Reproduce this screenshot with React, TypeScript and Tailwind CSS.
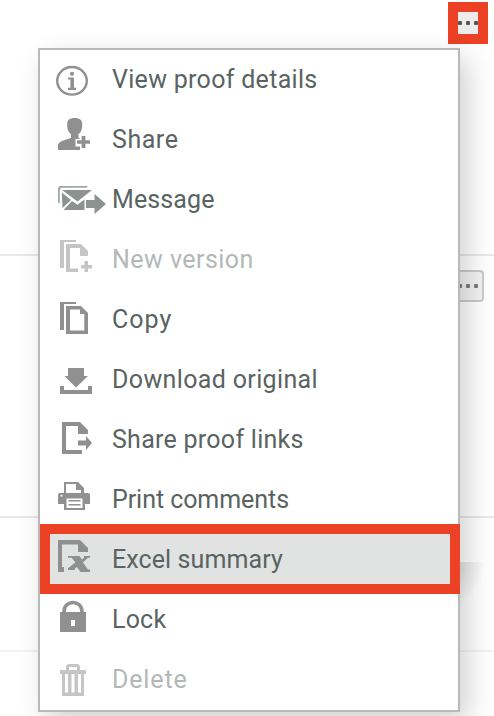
import type { ReactNode } from "react";

type Item = { label: string; tracking: string; icon: ReactNode; disabled?: boolean; active?: boolean };

const items: Item[] = [
  {
    label: "View proof details",
    tracking: "tracking-[0.3px]",
    icon: (
      <>
        <ellipse cx="72" cy="30.8" rx="14.8" ry="13.8" fill="none" stroke="currentColor" strokeWidth="2.4" />
        <circle cx="72" cy="23.8" r="2.1" />
        <path d="M68 27.4h6v10.4h2v2.2h-8v-2.2h2.4v-8.2H68z" />
      </>
    ),
  },
  {
    label: "Share",
    tracking: "tracking-[0.55px]",
    icon: (
      <>
        <path d="M74.7 8c5 0 7.500 2 7.500 6 0 4.500-.5 7.500-3.700 10.200V28l5.500 2v10H58v-4.500c0-3.500 3.500-4.500 13-7.500v-3.800C67.700 21.500 67.200 18.500 67.200 14c0-4 2.500-6 7.500-6z" />
        <path d="M80 25h6.500v4H92v7.500h-5.500V40H80v-3.500h-4.500V29H80z" fill="white" />
        <path d="M81.6 26h3.800v4.200H90v3.600h-4.600V38h-3.800v-4.200H77v-3.600h4.600z" />
      </>
    ),
  },
  {
    label: "Message",
    tracking: "tracking-[0.1px]",
    icon: (
      <g fill="#8b9290">
        <path d="M58 19q0-3 3-3h27l-1.500 1.800H62q-2.200 0-2.200 2.200v14L58 32z" opacity=".8" />
        <path d="M62 20h30L77.500 31.500z" />
        <path d="M61.800 22.500 71 30l-8.500 8z" />
        <path d="m72 31 5.500 3.700L83 30.500l3-2.200V40H63.500z" />
        <path d="M84.500 28h9v-6L107 34l-13.500 12v-6h-9z" fill="white" />
        <path d="M86 30h8.500v-6L106 34l-11.500 10v-6H86z" />
      </g>
    ),
  },
  {
    label: "New version",
    tracking: "tracking-[0.45px]",
    disabled: true,
    icon: (
      <>
        <path d="M60 10h16v2H64v26h-4z" />
        <path d="M66 14h15l7 7v5h-8v-8H70v20.500h8V42H66z" />
        <path d="M84.500 31h3.500v4h4v3.500h-4v3.500h-3.500v-3.500H81V35h3.500z" />
      </>
    ),
  },
  {
    label: "Copy",
    tracking: "tracking-[1px]",
    icon: (
      <>
        <path d="M60 12h16v2H64v26h-4z" />
        <path fillRule="evenodd" d="M66 16h15l7 7v21H66zm4 3.500v21h14.300V24H80v-4.500z" />
      </>
    ),
  },
  {
    label: "Download original",
    tracking: "tracking-[0.36px]",
    icon: (
      <>
        <path d="M68 18h16v8h4L76 37.500 64.500 26H68z" />
        <path d="M60 36h4v4h24v-4h4v8H60z" />
      </>
    ),
  },
  {
    label: "Share proof links",
    tracking: "tracking-[0.27px]",
    icon: (
      <>
        <path d="M62 12h18l8 8v4h-10v-8H66v24h16v4H62z" />
        <path d="M78 30.500h8V26l6 7-6 7v-4.500h-8z" />
      </>
    ),
  },
  {
    label: "Print comments",
    tracking: "tracking-[-0.06px]",
    icon: (
      <>
        <path fillRule="evenodd" d="M64 12h14l6 6v6H64zm2 2v10h15v-4h-5v-6z" />
        <path d="M60 23h28q2 0 2 2v9h-5v6H64v-6h-6v-9q0-2 2-2z" />
        <path d="M66.500 28.500h16V38h-16z" fill="white" />
        <path d="M68.500 30h12v1.500h-12zm0 4h12v1.500h-12z" />
        <path d="M60.500 25h2v1.500h-2z" fill="white" />
      </>
    ),
  },
  {
    label: "Excel summary",
    tracking: "tracking-[0.1px]",
    active: true,
    icon: (
      <>
        <path d="M58 10h22l8 8v4H78v-7.500H62V37h2v5h-6z" />
        <path d="M68 26h11.500l2.500 3.500 2-1.700V26h6v1.800h-2.200L83 32.500l5 7h2V42h-9.500l-3.500-5-2.200 1.800V40H68v-1.800l7.300-5.600-3.500-4.800H68z" />
      </>
    ),
  },
  {
    label: "Lock",
    tracking: "tracking-[0.2px]",
    icon: (
      <>
        <path d="M64 23v-1.500c0-12 18-12 18 0V23" fill="none" stroke="currentColor" strokeWidth="3.600" />
        <path fillRule="evenodd" d="M60 22h26v20H60zm11 8v6h4v-6z" />
      </>
    ),
  },
  {
    label: "Delete",
    tracking: "tracking-[0.85px]",
    disabled: true,
    icon: (
      <path fillRule="evenodd" d="M68 14h10l2 2v4h6v4h-2v22H62V24h-2v-4h6v-4zm1 3v3h8v-3zm-4 7v18.500h3V24zm6.500 0v18.500h3V24zm6.500 0v18.500h3V24z" />
    ),
  },
];

function Dots({ color }: { color: string }) {
  return (
    <div className="flex shrink-0 gap-1">
      {[0, 1, 2].map((n) => (
        <span key={n} className={`size-1 rounded-[1px] ${color}`} />
      ))}
    </div>
  );
}

function MenuRow({ item }: { item: Item }) {
  return (
    <li className={`flex h-[60px] items-center ${item.active ? "bg-[#e0e3e2]" : ""}`}>
      <svg viewBox="40 0 72 60" width="72" height="60" fill="currentColor" className={`shrink-0 ${item.disabled ? "text-[#c5c5c5]" : "text-[#909090]"}`}>
        {item.icon}
      </svg>
      <span className={`whitespace-nowrap text-[25px] leading-[60px] ${item.tracking} ${item.disabled ? "text-[#b3b8b7]" : "text-[#596362]"}`}>
        {item.label}
      </span>
    </li>
  );
}

export default function App() {
  return (
    <main className="relative h-[716px] w-[494px] overflow-hidden bg-white font-['Roboto',sans-serif]">
      <section className="flex h-64 justify-end border-b-2 border-[#e8e8e8] pt-0.5 pr-1.5">
        <div className="flex h-[42px] w-10 items-center justify-center border-10 border-[#ec4125] bg-[#ececec]">
          <Dots color="bg-[#555]" />
        </div>
      </section>
      <section className="flex h-[262px] justify-end border-b-2 border-[#e8e8e8] pt-3.5 pr-2.5">
        <div className="flex h-8 w-10 items-center justify-end rounded border-2 border-[#cacaca] bg-[#f3f3f3] pr-1">
          <Dots color="bg-[#7c7c7c]" />
        </div>
      </section>
      <section className="h-[134px] border-b-2 border-[#f2f2f2]" />

      <div className="absolute top-[562px] left-[440px] h-12 w-12 bg-radial-[at_25%_0%] from-black/15 to-transparent to-65%" />
      <ul className="absolute top-12 left-[38px] w-[422px] border-2 border-[#b9b9b9] bg-white shadow-[8px_10px_26px_rgba(0,0,0,0.18)]">
        {items.map((item) => (
          <MenuRow key={item.label} item={item} />
        ))}
      </ul>
      <div className="absolute top-[524px] left-10 h-[70px] w-[420px] border-10 border-[#ec4125]" />
    </main>
  );
}
